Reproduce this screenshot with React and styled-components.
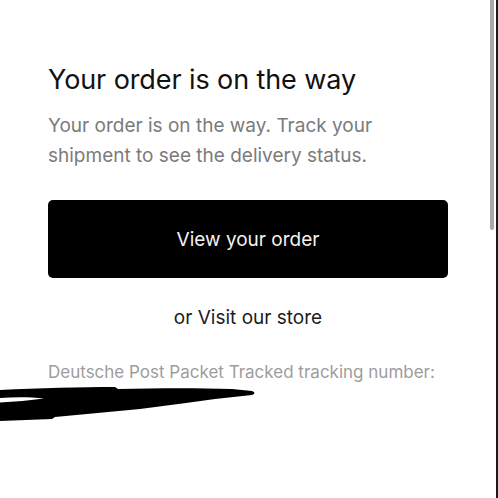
import React from 'react';
import styled, { createGlobalStyle } from 'styled-components';

const GlobalStyle = createGlobalStyle`
  html, body {
    margin: 0;
    padding: 0;
    background: #fff;
  }
  body {
    font-family: Inter, "Liberation Sans", Arial, sans-serif;
    -webkit-font-smoothing: antialiased;
  }
`;

const Screen = styled.div`
  position: relative;
  width: 498px;
  height: 498px;
  box-sizing: border-box;
  overflow: hidden;
  background: #fff;
  border-right: 2px solid #1a1a1a;
`;

const Content = styled.div`
  display: flex;
  flex-direction: column;
  padding: 63px 48px 0 48px;
`;

const Title = styled.h1`
  margin: 0;
  font-size: 27px;
  font-weight: 400;
  line-height: 34px;
  color: #111;
  letter-spacing: -0.1px;
`;

const Lead = styled.p`
  margin: 14px 0 0;
  font-size: 19px;
  line-height: 30px;
  color: #7b7b7b;
`;

const PrimaryButton = styled.a`
  display: flex;
  align-items: center;
  justify-content: center;
  margin-top: 29px;
  height: 78px;
  border-radius: 5px;
  background: #000;
  color: #f2f2f2;
  font-size: 19px;
  text-decoration: none;
`;

const SecondaryLink = styled.a`
  align-self: center;
  margin-top: 27px;
  font-size: 19px;
  line-height: 26px;
  color: #1c1c1c;
  text-decoration: none;
`;

const Tracking = styled.p`
  margin: 29px 0 0;
  font-size: 17px;
  line-height: 24px;
  color: #9d9d9d;
`;

const Redaction = styled.svg`
  display: block;
  margin: 2px 0 0 -48px;
`;

const ScrollThumb = styled.div`
  position: absolute;
  top: 0;
  right: 2px;
  width: 4px;
  height: 230px;
  border-radius: 0 0 2px 2px;
  background: #a8a8a8;
`;

export default function App() {
  return (
    <Screen>
      <GlobalStyle />
      <Content>
        <Title>Your order is on the way</Title>
        <Lead>
          Your order is on the way. Track your shipment to see the delivery
          status.
        </Lead>
        <PrimaryButton href="#">View your order</PrimaryButton>
        <SecondaryLink href="#">or Visit our store</SecondaryLink>
        <Tracking>Deutsche Post Packet Tracked tracking number:</Tracking>
        <Redaction width="260" height="36" viewBox="0 0 260 36">
          <path
            d="M0 4 C40 2 80 1 115 1 L118 3 C160 2 200 2 232 3 L252 5 Q257 7 252 9 L215 13 L186 17 L140 23 L55 31 L52 33 L0 35 Z"
            fill="#000"
          />
          <path
            d="M0 12 C15 11 30 11 44 12.5 C30 14.5 15 15.5 0 16.5 Z"
            fill="#fff"
          />
        </Redaction>
      </Content>
      <ScrollThumb />
    </Screen>
  );
}
